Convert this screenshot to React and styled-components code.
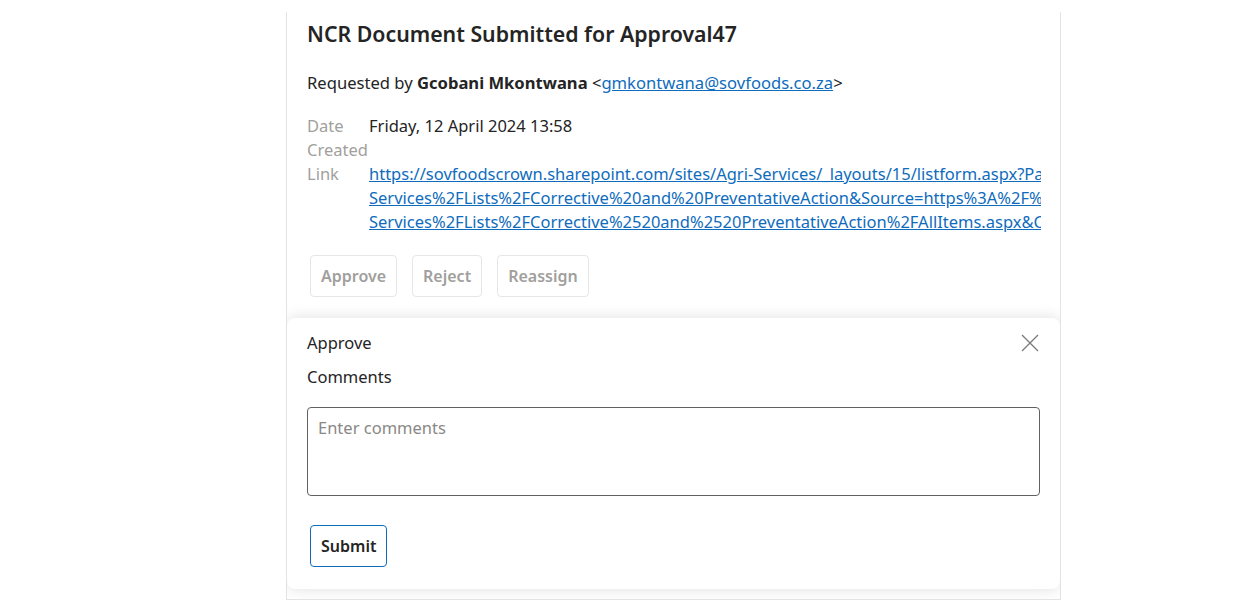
import React from 'react';
import styled, { createGlobalStyle } from 'styled-components';

const GlobalStyle = createGlobalStyle`
  html, body {
    margin: 0;
    padding: 0;
    background: #ffffff;
    height: 601px;
    overflow: hidden;
  }
  body {
    font-family: "Noto Sans", "Open Sans", sans-serif;
    color: #242424;
  }
`;

const Page = styled.div`
  padding-top: 12px;
  padding-left: 286px;
`;

const Card = styled.div`
  width: 773px;
  height: 587px;
  border: 1px solid #e3e3e3;
  border-top: none;
  overflow: hidden;
  display: flex;
  flex-direction: column;
`;

const Body = styled.div`
  padding: 7px 19px 0 20px;
`;

const Title = styled.h1`
  margin: 0;
  font-size: 21.3px;
  line-height: 30px;
  font-weight: 600;
  color: #242424;
`;

const Requested = styled.p`
  margin: 22px 0 0;
  font-size: 16.6px;
  line-height: 24px;
  strong {
    font-weight: 700;
  }
`;

const Link = styled.a`
  color: #0f6cbd;
  text-decoration: underline;
`;

const Details = styled.div`
  margin-top: 19px;
  display: grid;
  grid-template-columns: 62px 1fr;
  font-size: 16.5px;
  line-height: 24px;
`;

const Label = styled.div`
  color: #a19f9d;
  padding-right: 4px;
`;

const Value = styled.div`
  min-width: 0;
  overflow: hidden;
`;

const LinkLine = styled.span`
  display: block;
  white-space: nowrap;
`;

const Actions = styled.div`
  display: flex;
  gap: 15px;
  margin: 21px 0 0 3px;
`;

const Button = styled.button`
  height: 42px;
  padding: 0 10px;
  background: #fff;
  border: 1px solid ${p => (p.$primary ? '#0f6cbd' : '#e6e6e6')};
  border-radius: 4px;
  font-family: inherit;
  font-size: 16px;
  font-weight: 600;
  color: ${p => (p.$primary ? '#242424' : '#a19f9d')};
  cursor: pointer;
`;

const Panel = styled.div`
  margin-top: 21px;
  background: #fff;
  border-radius: 8px;
  box-shadow: 0 0 15px rgba(0, 0, 0, 0.13);
  padding: 13px 20px 22px;
  display: flex;
  flex-direction: column;
`;

const PanelHead = styled.div`
  display: flex;
  justify-content: space-between;
  align-items: center;
  font-size: 16.5px;
  line-height: 24px;
`;

const CloseButton = styled.button`
  width: 20px;
  height: 20px;
  padding: 0;
  border: none;
  background: none;
  display: flex;
  align-items: center;
  justify-content: center;
  cursor: pointer;
`;

const FieldLabel = styled.div`
  margin-top: 10px;
  font-size: 16.5px;
  line-height: 24px;
`;

const TextArea = styled.textarea`
  margin-top: 18px;
  height: 89px;
  box-sizing: border-box;
  width: 100%;
  border: 1px solid #616161;
  border-radius: 4px;
  padding: 8px 10px;
  font-family: inherit;
  font-size: 16.5px;
  resize: none;
  &::placeholder {
    color: #8a8886;
  }
`;

const SubmitRow = styled.div`
  margin: 29px 0 0 3px;
`;

export default function App() {
  return (
    <>
      <GlobalStyle />
      <Page>
        <Card>
          <Body>
            <Title>NCR Document Submitted for Approval47</Title>
            <Requested>
              Requested by <strong>Gcobani Mkontwana</strong> &lt;
              <Link href="#">gmkontwana@sovfoods.co.za</Link>&gt;
            </Requested>
            <Details>
              <Label>Date Created</Label>
              <Value>Friday, 12 April 2024 13:58</Value>
              <Label>Link</Label>
              <Value>
                <Link href="#">
                  <LinkLine>https://sovfoodscrown.sharepoint.com/sites/Agri-Services/_layouts/15/listform.aspx?PageType=4&amp;ListId=</LinkLine>
                  <LinkLine>Services%2FLists%2FCorrective%20and%20PreventativeAction&amp;Source=https%3A%2F%2Fsovfoodscrown.sharepoint.com</LinkLine>
                  <LinkLine>Services%2FLists%2FCorrective%2520and%2520PreventativeAction%2FAllItems.aspx&amp;ContentTypeId=</LinkLine>
                </Link>
              </Value>
            </Details>
            <Actions>
              <Button>Approve</Button>
              <Button>Reject</Button>
              <Button>Reassign</Button>
            </Actions>
          </Body>
          <Panel>
            <PanelHead>
              <span>Approve</span>
              <CloseButton aria-label="Close">
                <svg width="18" height="18" viewBox="0 0 18 18">
                  <path d="M1 1 L17 17 M17 1 L1 17" stroke="#7a7a7a" strokeWidth="1.3" fill="none" />
                </svg>
              </CloseButton>
            </PanelHead>
            <FieldLabel>Comments</FieldLabel>
            <TextArea placeholder="Enter comments" />
            <SubmitRow>
              <Button $primary>Submit</Button>
            </SubmitRow>
          </Panel>
        </Card>
      </Page>
    </>
  );
}
